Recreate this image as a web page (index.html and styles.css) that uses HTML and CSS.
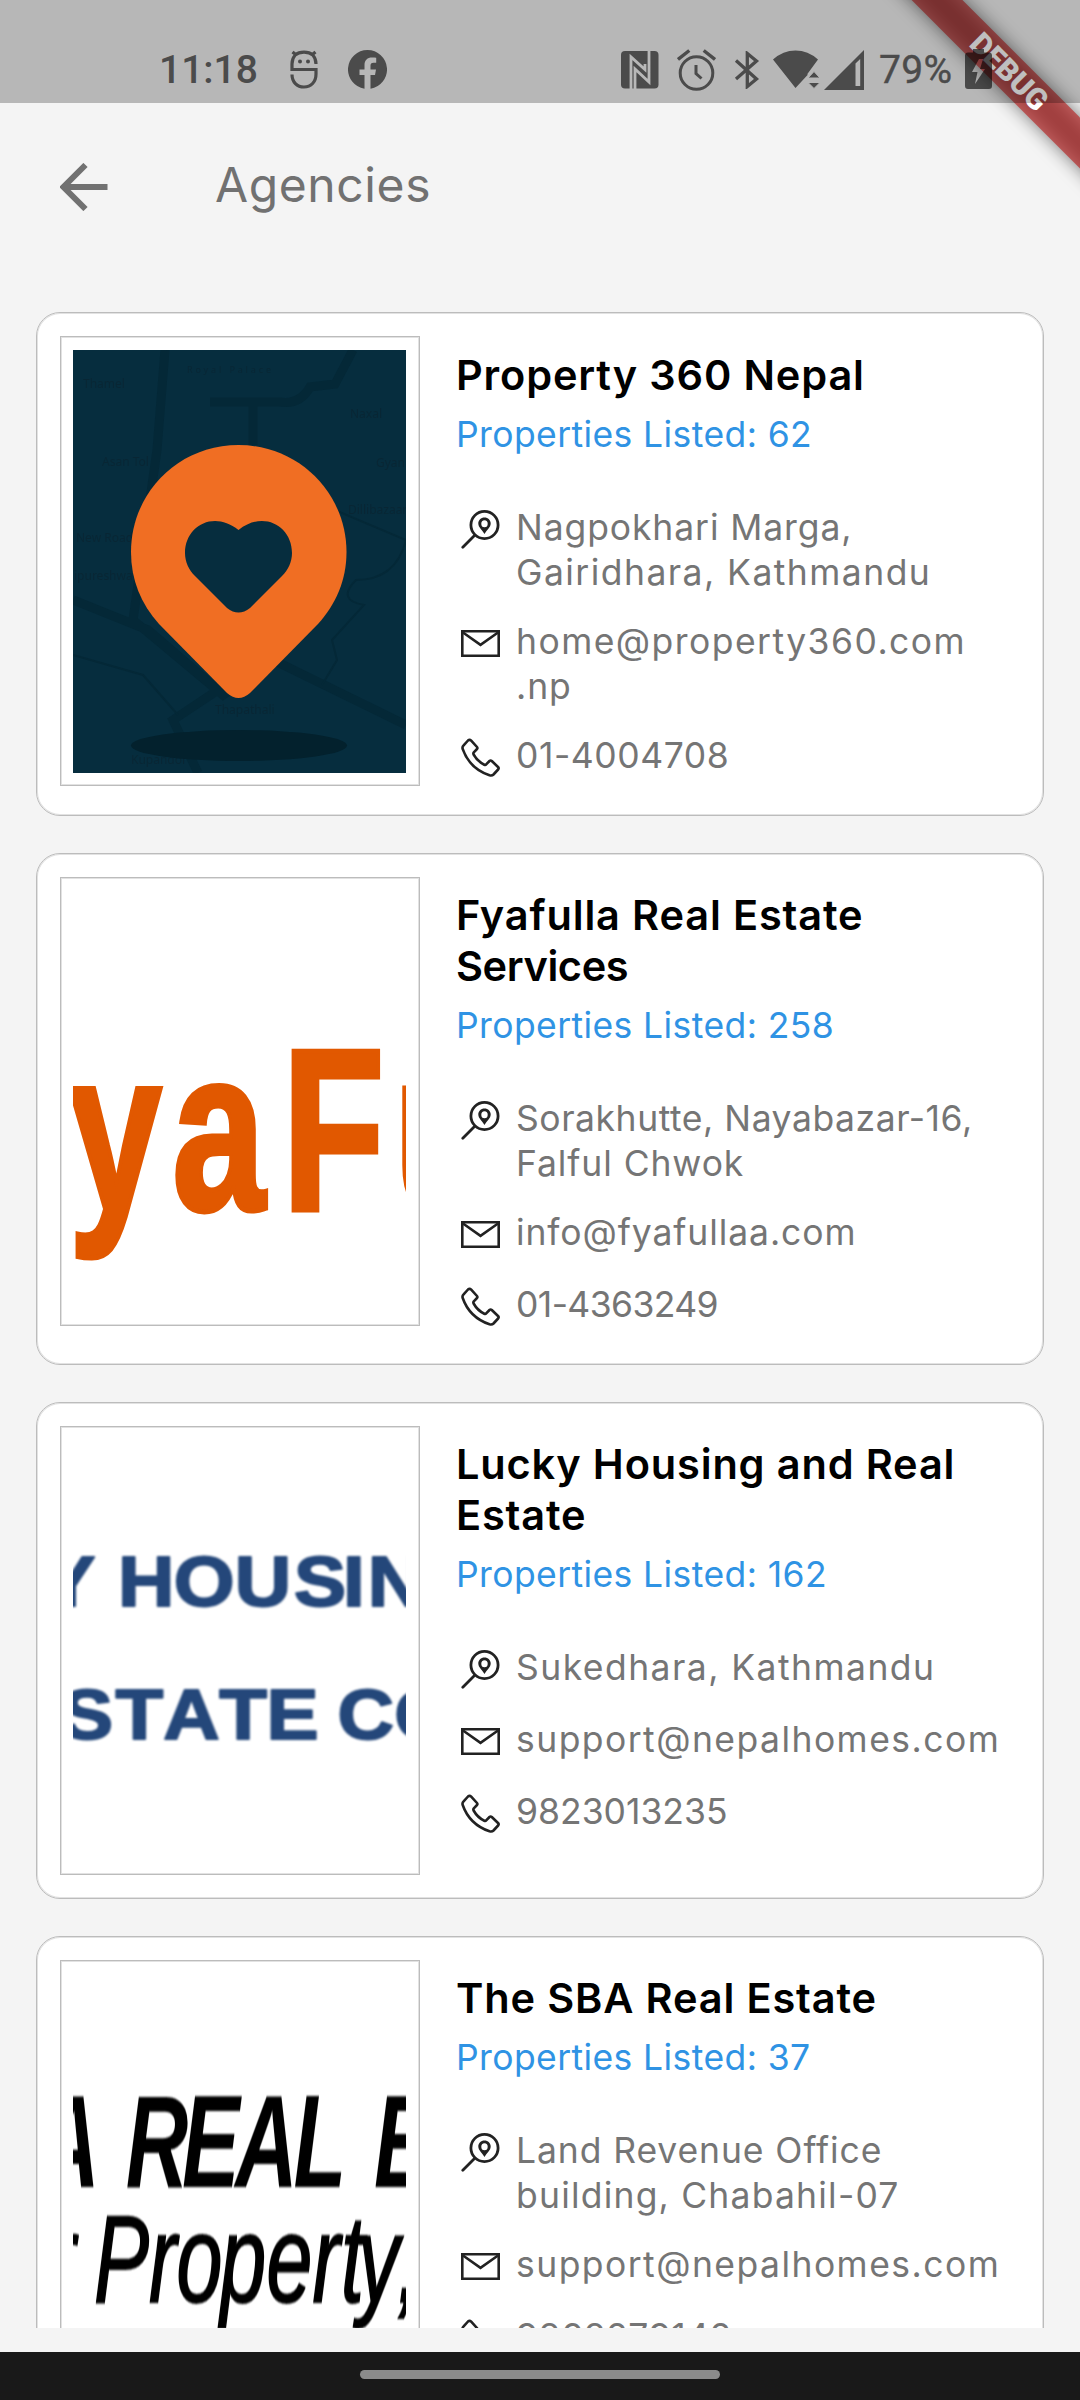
FILE: index.html
```html
<!DOCTYPE html>
<html lang="en">
<head>
<meta charset="utf-8">
<title>Agencies</title>
<link rel="stylesheet" href="styles.css">
</head>
<body>
<svg class="sprite" aria-hidden="true">
  <symbol id="i-location" viewBox="0 0 39 39">
    <g fill="none" stroke="#222" stroke-width="2.8" stroke-linecap="round">
      <circle cx="23.5" cy="15" r="13.6"/>
      <path d="M13.5 25.500 1.800 37.200"/>
    </g>
    <path fill="#222" fill-rule="evenodd" d="M23.500 7.500c-3.600 0-6.200 2.700-6.200 6.100 0 3.800 3.600 6.200 6.200 10.400 2.600-4.200 6.200-6.600 6.200-10.400 0-3.400-2.600-6.100-6.200-6.100zm0 2.800a3.200 3.500 0 1 1 0 7 3.200 3.500 0 1 1 0-7z"/>
  </symbol>
  <symbol id="i-mail" viewBox="0 0 39 39">
    <g fill="none" stroke="#222" stroke-width="2.600">
      <path d="M1.300 7.300h36.400v24.400H1.300z"/>
      <path d="M2 8.500l17.500 12.300L37 8.500"/>
    </g>
  </symbol>
  <symbol id="i-phone" viewBox="0 0 39 39">
    <path fill="none" stroke="#222" stroke-width="2.600" stroke-linejoin="round" d="M2.600 7.400 7 2.500Q8.600 1 10.200 2.600L16 9Q16.800 10 16 11L12.800 14.300Q12 15.300 12.600 16.500 16.500 23.500 23.300 26.700 24.500 27.200 25.200 26.400L28.500 23Q29.600 22 30.800 23L37 29Q38.200 30.300 37.100 31.500L32.500 36.500Q31 38 28.500 37.300 8.500 30.500 1.700 11 1 9 2.600 7.400Z"/>
  </symbol>
</svg>

<div class="screen">
  <header class="status">
    <div class="status-left">
      <span class="clock">11:18</span>
      <svg class="ic-bug" viewBox="0 0 28 39"><g fill="none" stroke="#4b4b4b" stroke-width="3.200"><path d="M26 14C26 6 21 2.200 14 2.200S2 6 2 14v5.500h24V24c0 8-5 13-12 13S2 32 2 24.500"/><path d="M6 4.800 2.500 2M22 4.800 25.500 2"/></g><circle cx="10" cy="11.500" r="2" fill="#4b4b4b"/><circle cx="18" cy="11.500" r="2" fill="#4b4b4b"/></svg>
      <svg class="ic-fb" viewBox="0 0 39 39"><path fill="#4b4b4b" d="M19.500 0a19.500 19.500 0 0 0-3 38.770V25h-5v-5.600h5V15c0-5 3-7.600 7.400-7.600 1.500 0 3 .1 4.300.4v5h-2.600c-2.400 0-3.100 1.300-3.100 3v3.600h5.500l-1 5.600h-4.500v13.770A19.500 19.500 0 0 0 19.500 0z"/></svg>
    </div>
    <div class="status-right">
      <svg class="ic-nfc" viewBox="0 0 38 38"><rect width="37.500" height="37.500" rx="4" fill="#4b4b4b"/><path fill="none" stroke="#b8b8b8" stroke-width="2.800" d="M10 38V6l14 12.500V13M28 0v31L14 18v20"/></svg>
      <svg class="ic-alarm" viewBox="0 0 39 42"><g fill="none" stroke="#4b4b4b" stroke-width="3"><circle cx="19.500" cy="24" r="16.300"/><path d="M19 16v8.500l5.500 5"/><path stroke-width="3.400" d="M1 10.500 12.300 1.500M38 10.500 26.700 1.500"/></g></svg>
      <svg class="ic-bt" viewBox="0 0 26 38"><path fill="none" stroke="#4b4b4b" stroke-width="3.300" d="M2 9.500 22.500 28 13.300 35.500V2.500L22.500 10 2 28"/></svg>
      <svg class="ic-wifi" viewBox="0 0 46 39"><path fill="#4b4b4b" d="M0 9.500Q10 .500 22.500 .500T45 9.500L34 24.500h1L22.500 38z"/><path fill="#4b4b4b" stroke="#b8b8b8" stroke-width="1" d="M35 28l6-6.500 6 6.500zM35 32.500l6 6 6-6z"/></svg>
      <svg class="ic-signal" viewBox="0 0 40 40"><path fill="#4b4b4b" d="M40 0v40H0z"/><path fill="#b8b8b8" d="M36.200 9v27h-4.700V13.500z"/></svg>
      <span class="percent">79%</span>
      <svg class="ic-battery" viewBox="0 0 27 40"><path fill="#000" fill-opacity=".6" fill-rule="evenodd" d="M8 0h11v3.500h5q3 0 3 3V37q0 3-3 3H3q-3 0-3-3V6.500q0-3 3-3h5zM14 10 7 23h5.500L10 35l10-15h-5l3-10z"/></svg>
    </div>
  </header>
  <div class="debug"><div class="ribbon"><span>DEBUG</span></div></div>

  <nav class="appbar">
    <svg class="back" viewBox="0 0 48 48"><path fill="none" stroke="#717171" stroke-width="6" d="M47.500 24H5M25.500 2 3.500 24l22 22"/></svg>
    <h1>Agencies</h1>
  </nav>

  <main class="list">
    <article class="card c1">
      <div class="frame">
        <svg class="logo" viewBox="0 0 333 423">
          <rect width="333" height="423" fill="#062d3e"/>
          <g fill="none" stroke="#042837">
            <path stroke-width="9" d="M92 0 84 100 60 270 150 345 200 310 333 375M137 52h70q20 3 30-15l25-3 18-34M0 250l75 30 70 60-45 30 25 53M180 55v40"/>
            <path stroke-width="2" d="M250 155l83 35M333 190q-10 40-50 40-20 20 8 25l-32 35 5 20-15 25M0 305l70 20 35 40"/>
          </g>
          <g class="maptext">
            <text x="10" y="38">Thamel</text><text x="114" y="23" font-size="9" textLength="84">Royal Palace</text>
            <text x="277" y="68">Naxal</text><text x="29" y="116">Asan Tol</text><text x="303" y="117">Gyan</text>
            <text x="275" y="164">Dillibazaar</text><text x="3" y="192">New Road</text><text x="1" y="230">ipureshwar</text>
            <text x="142" y="364">Thapathali</text><text x="58" y="414">Kupandol</text>
          </g>
          <ellipse cx="166" cy="395.500" rx="108" ry="15.500" fill="#03212d"/>
          <path fill="#f06e23" d="M165.500 95C105 95 58 143 58 202c0 28 10 52 28 72l68 69q11.500 10 23 0l68-69c18-20 28.500-44 28.500-72 0-59-48-107-108-107z"/>
          <path fill="#062d3e" d="M165.500 180c-25-20-53.500-4-53.500 23 0 9 4 17 10 23l32 32q11.500 9 23 0l32-32c6-6 10-14 10-23 0-27-28.500-43-53.500-23z"/>
        </svg>
      </div>
      <div class="info">
        <h2>Property 360 Nepal</h2>
        <p class="listed">Properties Listed: 62</p>
        <ul>
          <li><svg><use href="#i-location"/></svg><p><span class="ls-m">Nagpokhari Marga,</span><span class="ls-xl">Gairidhara, Kathmandu</span></p></li>
          <li><svg><use href="#i-mail"/></svg><p><span class="ls-xl">home@property360.com</span><span class="ls-m">.np</span></p></li>
          <li><svg><use href="#i-phone"/></svg><p><span class="ls-s">01-4004708</span></p></li>
        </ul>
      </div>
    </article>

    <article class="card c2">
      <div class="frame">
        <svg class="logo" viewBox="0 0 333 423">
          <g class="fya" transform="scale(.724 1)"><text y="319.500" x="-6 137 289 443">yaFu</text></g>
        </svg>
      </div>
      <div class="info">
        <h2>Fyafulla Real Estate<br><span class="tight">Services</span></h2>
        <p class="listed">Properties Listed: 258</p>
        <ul>
          <li><svg><use href="#i-location"/></svg><p><span class="ls-s">Sorakhutte, Nayabazar-16,</span><span class="ls-m">Falful Chwok</span></p></li>
          <li><svg><use href="#i-mail"/></svg><p><span class="ls-m">info@fyafullaa.com</span></p></li>
          <li><svg><use href="#i-phone"/></svg><p><span class="ls-neg">01-4363249</span></p></li>
        </ul>
      </div>
    </article>

    <article class="card c3">
      <div class="frame">
        <svg class="logo" viewBox="0 0 333 423">
          <g class="lucky" transform="scale(1.1 1)">
            <text y="166" x="-27 41 91.500 147 201 245.500 268">YHOUSIN</text>
            <text y="299" x="-11 38.600 82 133 176 240.500 292">STATECO</text>
          </g>
        </svg>
      </div>
      <div class="info">
        <h2>Lucky Housing and Real<br>Estate</h2>
        <p class="listed">Properties Listed: 162</p>
        <ul>
          <li><svg><use href="#i-location"/></svg><p><span class="ls-xl">Sukedhara, Kathmandu</span></p></li>
          <li><svg><use href="#i-mail"/></svg><p><span class="ls-xl">support@nepalhomes.com</span></p></li>
          <li><svg><use href="#i-phone"/></svg><p><span>9823013235</span></p></li>
        </ul>
      </div>
    </article>

    <article class="card c4">
      <div class="frame">
        <svg class="logo" viewBox="0 0 333 423">
          <g transform="scale(.66 1)">
            <text class="sba" y="213" x="-54 80 165 246 334 456">AREALE</text>
            <text class="sba2" y="328" x="-38 32 115 157 223 293 363 406 432 491">rProperty,</text>
          </g>
        </svg>
      </div>
      <div class="info">
        <h2>The SBA Real Estate</h2>
        <p class="listed">Properties Listed: 37</p>
        <ul>
          <li><svg><use href="#i-location"/></svg><p><span class="ls-m">Land Revenue Office</span><span class="ls-l">building, Chabahil-07</span></p></li>
          <li><svg><use href="#i-mail"/></svg><p><span class="ls-xl">support@nepalhomes.com</span></p></li>
          <li><svg><use href="#i-phone"/></svg><p><span class="ls-s">9868279142</span></p></li>
        </ul>
      </div>
    </article>
  </main>
  <footer class="gesture"><div class="pill"></div></footer>
</div>
</body>
</html>
```
FILE: styles.css
```css
* { box-sizing: border-box; }
body { margin: 0; background: #f4f4f4; font-family: Inter, "Open Sans", sans-serif; }
h1, h2, p, ul { margin: 0; padding: 0; font-weight: 400; }
ul { list-style: none; }
svg { display: block; flex: none; }
.sprite { position: absolute; width: 0; height: 0; }

.screen { position: relative; width: 1080px; height: 2400px; overflow: hidden; display: flex; flex-direction: column; background: #f4f4f4; }

.status { position: relative; z-index: 2; flex: none; height: 103px; background: rgba(0, 0, 0, .25); display: flex; justify-content: space-between; padding: 49px 88px 0 159px; font-family: Roboto, sans-serif; font-size: 39px; line-height: 42px; color: #4b4b4b; }
.status-left, .status-right { display: flex; align-items: flex-start; height: 42px; }
.clock { width: 131px; font-weight: 500; letter-spacing: 0; }
.percent { width: 86px; letter-spacing: .3px; -webkit-text-stroke: .4px #4b4b4b; }
.ic-bug { width: 28px; height: 39px; margin: 1px 29.500px 0 0; }
.ic-fb { width: 39px; height: 39px; margin-top: 1px; }
.ic-nfc { width: 38px; height: 38px; margin: 2px 18px 0 0; }
.ic-alarm { width: 39px; height: 42px; margin-right: 18px; }
.ic-bt { width: 26px; height: 38px; margin: 2px 13px 0 0; }
.ic-wifi { width: 46px; height: 39px; margin: 1px 5px 0 0; overflow: visible; }
.ic-signal { width: 40px; height: 40px; margin: 1px 15px 0 0; }
.ic-battery { width: 27px; height: 40px; }

.debug { position: absolute; z-index: 1; top: 0; right: 0; width: 260px; height: 260px; overflow: hidden; }
.ribbon { position: absolute; left: -11.500px; top: 53.500px; width: 400px; height: 36px; transform: rotate(45deg); text-align: center; font: 900 30px/36px Roboto, sans-serif; color: #fff; }
.ribbon::before { content: ""; position: absolute; inset: 0; z-index: -2; background: rgba(0, 0, 0, .5); filter: blur(9px); }
.ribbon::after { content: ""; position: absolute; inset: 0; z-index: -1; background: rgba(183, 28, 28, .63); }

.appbar { flex: none; height: 168px; display: flex; align-items: center; padding-left: 60px; }
.back { width: 48px; height: 48px; }
.appbar h1 { margin: -5px 0 0 107px; font-size: 48px; line-height: 60px; letter-spacing: .600px; color: #717171; }

.list { flex: none; height: 2057px; overflow: hidden; padding: 41px 36px 0; display: flex; flex-direction: column; gap: 37px; }
.card { flex: none; width: 1008px; background: #fff; border: 1px solid #bcbcbc; box-shadow: inset 0 0 0 1px #e2e2e2; border-radius: 24px; padding: 23px; display: flex; }
.c1 { height: 504px; }
.c2 { height: 512px; }
.c3 { height: 497px; }
.c4 { height: 504px; }
.frame { flex: none; width: 360px; height: 450px; border: 1px solid #bcbcbc; box-shadow: inset 0 0 0 1px #e2e2e2; padding: 13px 12px; }
.logo { width: 333px; height: 423px; overflow: hidden; }
.c2 .frame, .c3 .frame { height: 449px; }

.info { margin: 14px 0 0 36px; }
.c2 .info, .c3 .info, .c4 .info { margin-top: 13px; }
.info h2 { font-size: 41.500px; line-height: 51px; font-weight: 600; color: #000; letter-spacing: .850px; white-space: nowrap; }
.tight { letter-spacing: -.400px; }
.listed { margin-top: 10.500px; font-size: 35.500px; line-height: 45px; letter-spacing: .400px; color: #2f93e4; white-space: nowrap; }
.info ul { margin-top: 48.500px; display: flex; flex-direction: column; gap: 24px; }
.info li { display: flex; min-height: 48px; font-size: 35.500px; line-height: 45px; color: #757575; white-space: nowrap; }
.info li svg { width: 39px; height: 39px; margin: 5px 16px 0 5px; }
.info li span { display: block; }
.ls-neg { letter-spacing: -.600px; }
.ls-s { letter-spacing: .550px; }
.ls-m { letter-spacing: .900px; }
.ls-l { letter-spacing: 1.200px; }
.ls-xl { letter-spacing: 1.450px; }

.maptext { font: 12px "Noto Sans", sans-serif; fill: #0a2431; opacity: .7; }
.fya { font: bold 231px "Liberation Sans", Arial, sans-serif; fill: #e15800; stroke: #e15800; stroke-width: 5px; }
.lucky { font: bold 71px "Liberation Sans", Arial, sans-serif; fill: #24477a; stroke: #24477a; stroke-width: 2px; stroke-linejoin: round; filter: blur(.8px); }
.sba { font: italic bold 131px "Liberation Sans", Arial, sans-serif; filter: blur(.8px); }
.sba2 { font: italic 125px "Liberation Sans", Arial, sans-serif; stroke: #000; stroke-width: 2px; filter: blur(.8px); }

.gesture { flex: none; margin-top: 24px; height: 48px; background: #191919; display: flex; justify-content: center; padding-top: 18px; }
.pill { width: 360px; height: 9px; border-radius: 5px; background: #8b8b8b; }
```
